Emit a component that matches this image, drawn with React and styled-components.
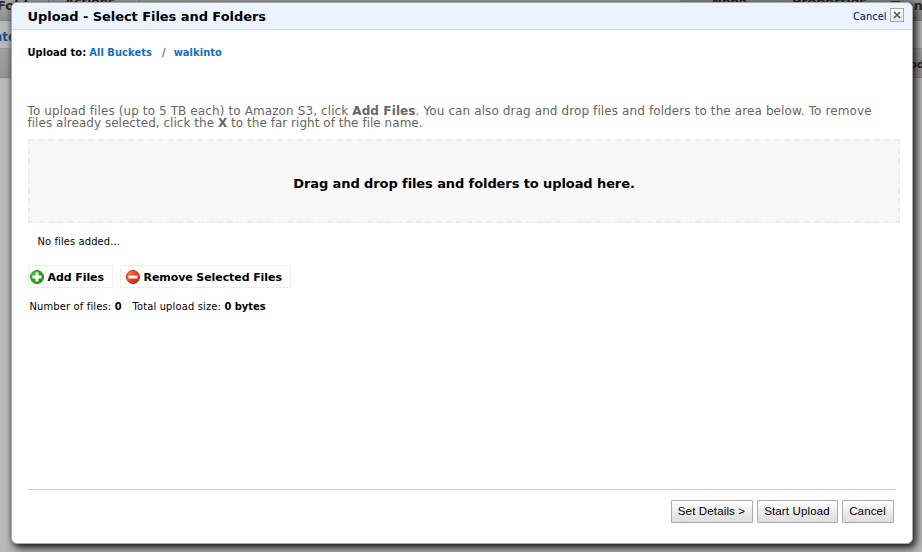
import React from "react";
import styled, { createGlobalStyle } from "styled-components";

const Global = createGlobalStyle`
  * { box-sizing: border-box; }
  html, body { margin: 0; height: 100%; overflow: hidden; }
  body { font-family: "DejaVu Sans", sans-serif; color: #000; background: #b9b9b9; }
`;

const small = `"DejaVu Sans Condensed", "DejaVu Sans", sans-serif`;

const Page = styled.div`
  position: relative;
  width: 922px;
  height: 552px;
  overflow: hidden;
  background: #b9b9b9;
`;

const Toolbar = styled.div`
  display: flex;
  height: 21px;
  background: linear-gradient(#a5a5a5, #929292);
  border-bottom: 1px solid #818181;
`;

const Tool = styled.div`
  width: ${(p) => p.$w}px;
  height: 20px;
  padding-left: ${(p) => p.$pad || 0}px;
  flex: none;
  overflow: hidden;
  white-space: nowrap;
  border-right: 1px solid #858585;
  background: ${(p) => (p.$dark ? "#8d8d8d" : "transparent")};
  font: bold ${(p) => p.$size || 12}px/20px "DejaVu Sans", sans-serif;
  color: #292929;
  & > span { display: block; margin-top: ${(p) => p.$up || 0}px; margin-left: ${(p) => p.$shift || 0}px; }
`;

const PathRow = styled.div`
  height: 28px;
  border-bottom: 1px solid #999;
  font: bold 13px/32px ${small};
  color: #1f4f8a;
  & > span { margin-left: -6px; }
`;

const ColumnRow = styled.div`
  display: flex;
  justify-content: flex-end;
  height: 29px;
  background: linear-gradient(#a2a2a2, #959595);
  border-bottom: 1px solid #878787;
  font: bold 11px/31px ${small};
  color: #222;
  & > span { margin-right: -2px; }
`;

const Dialog = styled.section`
  position: absolute;
  left: 11px;
  top: 2px;
  width: 902px;
  height: 542px;
  display: flex;
  flex-direction: column;
  background: #fff;
  border: 1px solid #aaa;
  border-radius: 6px;
  box-shadow: 3px 4px 8px 0 rgba(0, 0, 0, 0.85), 0 0 5px rgba(0, 0, 0, 0.3);
  overflow: hidden;
`;

const Header = styled.header`
  display: flex;
  justify-content: space-between;
  height: 27px;
  flex: none;
  padding: 0 8px 0 15.5px;
  background: #eaf3fe;
  border-bottom: 1px solid #c3dff2;
`;

const Title = styled.h1`
  margin: 0;
  font: bold 13px/27px "DejaVu Sans", sans-serif;
  letter-spacing: -0.06px;
  white-space: nowrap;
`;

const Close = styled.button`
  display: flex;
  gap: 3.5px;
  padding: 5px 0 0;
  border: 0;
  background: none;
  color: #000080;
  font: 11px/17px ${small};
`;

const CloseBox = styled.span`
  display: grid;
  place-items: center;
  width: 14px;
  height: 14px;
  border: 1px solid #aaa;
  background: linear-gradient(#fff, #e5e5e5);
`;

const Content = styled.main`
  display: flex;
  flex-direction: column;
  padding: 0 12px 0 16px;
`;

const Crumbs = styled.nav`
  display: flex;
  margin: 15px 0 0 -0.5px;
  height: 14px;
  font: bold 11px/15px ${small};
  letter-spacing: 0.07px;
  white-space: pre;
`;

const Crumb = styled.span`
  color: #146ebe;
  margin-left: ${(p) => p.$gap}px;
`;

const Slash = styled.span`
  margin-left: 10px;
  color: #666;
`;

const Help = styled.div`
  margin: 46px 0 0 -0.5px;
  font-size: 12px;
  line-height: 12px;
  color: #666;
  white-space: nowrap;
`;

const HelpLine = styled.div`
  letter-spacing: ${(p) => p.$track}px;
`;

const DropZone = styled.div`
  display: grid;
  place-items: center;
  height: 84px;
  width: 872px;
  margin-top: 10px;
  padding-top: 5px;
  border: 2px dashed #ededed;
  background: #f8f8f8;
  font: bold 13px/16px "DejaVu Sans", sans-serif;
  letter-spacing: -0.095px;
`;

const Empty = styled.div`
  margin: 12px 0 0 9.5px;
  font: 11px/14px ${small};
  letter-spacing: 0.12px;
`;

const FileActions = styled.div`
  display: flex;
  gap: 7px;
  margin-top: 16px;
`;

const FileButton = styled.button`
  display: flex;
  align-items: center;
  gap: 4px;
  width: ${(p) => p.$w}px;
  height: 23px;
  padding: 0 0 0 ${(p) => p.$pad}px;
  border: 1px solid #eee;
  background: #fff;
  color: #000;
  font: bold 11px/14px "DejaVu Sans", sans-serif;
  letter-spacing: -0.08px;
  white-space: nowrap;
  & > span { padding-top: 2px; margin-left: -0.5px; }
`;

const Summary = styled.div`
  display: flex;
  gap: 11px;
  margin: 12px 0 0 1.5px;
  font: 11px/14px ${small};
  letter-spacing: 0.17px;
  & b { letter-spacing: 0; }
`;

const Footer = styled.footer`
  display: flex;
  justify-content: flex-end;
  gap: 4px;
  margin: auto 16px 20px;
  padding: 10px 2px 0 0;
  border-top: 1px solid #ccc;
`;

const FooterButton = styled.button`
  width: ${(p) => p.$w}px;
  height: 23px;
  padding: 0 1px 0 0;
  border: 1px solid #aaa;
  border-radius: 1px;
  background: linear-gradient(#fff, #ddd);
  color: #000;
  font: 11.5px/19px "Liberation Sans", sans-serif;
  letter-spacing: 0.15px;
  white-space: nowrap;
`;

function RoundIcon({ kind }) {
  const add = kind === "add";
  return (
    <svg width="14" height="14" viewBox="0 0 14 14">
      <defs>
        <linearGradient id={kind} x1="0" y1="0" x2="1" y2="1">
          <stop offset="0" stopColor={add ? "#75c663" : "#ff9a75"} />
          <stop offset=".5" stopColor={add ? "#28a51b" : "#f23b18"} />
          <stop offset="1" stopColor={add ? "#118708" : "#c91e09"} />
        </linearGradient>
      </defs>
      <circle cx="7" cy="7" r="6.5" fill={`url(#${kind})`} stroke={add ? "#268d1d" : "#bb2d17"} strokeWidth="1" />
      <path d={add ? "M5.5 2.5h3v3h3v3h-3v3h-3v-3h-3v-3h3z" : "M2.5 5.5h9v3h-9z"} fill="#fff" />
    </svg>
  );
}

export default function App() {
  return (
    <>
      <Global />
      <Page>
        <Toolbar>
          <Tool $w={49} $up={-4} $size={13} $shift={-3}><span>Folder</span></Tool>
          <Tool $w={5} />
          <Tool $w={86} $pad={11} $up={-8}><span>Actions</span></Tool>
          <Tool $w={541} />
          <Tool $w={98} $dark $pad={31} $up={-8}><span>None</span></Tool>
          <Tool $w={97} $dark $pad={13} $up={-8} $size={12.7}><span>Properties</span></Tool>
          <Tool $w={60} $dark $pad={15} $up={-4} $size={13}><span>Transfers</span></Tool>
        </Toolbar>
        <PathRow><span>nto</span></PathRow>
        <ColumnRow><span>od</span></ColumnRow>
        <Dialog>
          <Header>
            <Title>Upload - Select Files and Folders</Title>
            <Close>
              Cancel
              <CloseBox>
                <svg width="8" height="8" viewBox="0 0 8 8">
                  <path d="M1 1l6 6M7 1L1 7" stroke="#555" strokeWidth="1.6" />
                </svg>
              </CloseBox>
            </Close>
          </Header>
          <Content>
            <Crumbs>
              Upload to:<Crumb $gap={3}>All Buckets</Crumb>
              <Slash>/</Slash>
              <Crumb $gap={8}>walkinto</Crumb>
            </Crumbs>
            <Help>
              <HelpLine $track={0.107}>
                To upload files (up to 5 TB each) to Amazon S3, click <b>Add Files</b>. You can also drag and drop files and folders to the area below. To remove
              </HelpLine>
              <HelpLine $track={0.03}>
                files already selected, click the <b>X</b> to the far right of the file name.
              </HelpLine>
            </Help>
            <DropZone>Drag and drop files and folders to upload here.</DropZone>
            <Empty>No files added...</Empty>
            <FileActions>
              <FileButton $w={85} $pad={1}><RoundIcon kind="add" /><span>Add Files</span></FileButton>
              <FileButton $w={171} $pad={5}><RoundIcon kind="remove" /><span>Remove Selected Files</span></FileButton>
            </FileActions>
            <Summary>
              <span>Number of files: <b>0</b></span>
              <span>Total upload size: <b>0 bytes</b></span>
            </Summary>
          </Content>
          <Footer>
            <FooterButton $w={82}>Set Details &gt;</FooterButton>
            <FooterButton $w={81}>Start Upload</FooterButton>
            <FooterButton $w={52}>Cancel</FooterButton>
          </Footer>
        </Dialog>
      </Page>
    </>
  );
}
